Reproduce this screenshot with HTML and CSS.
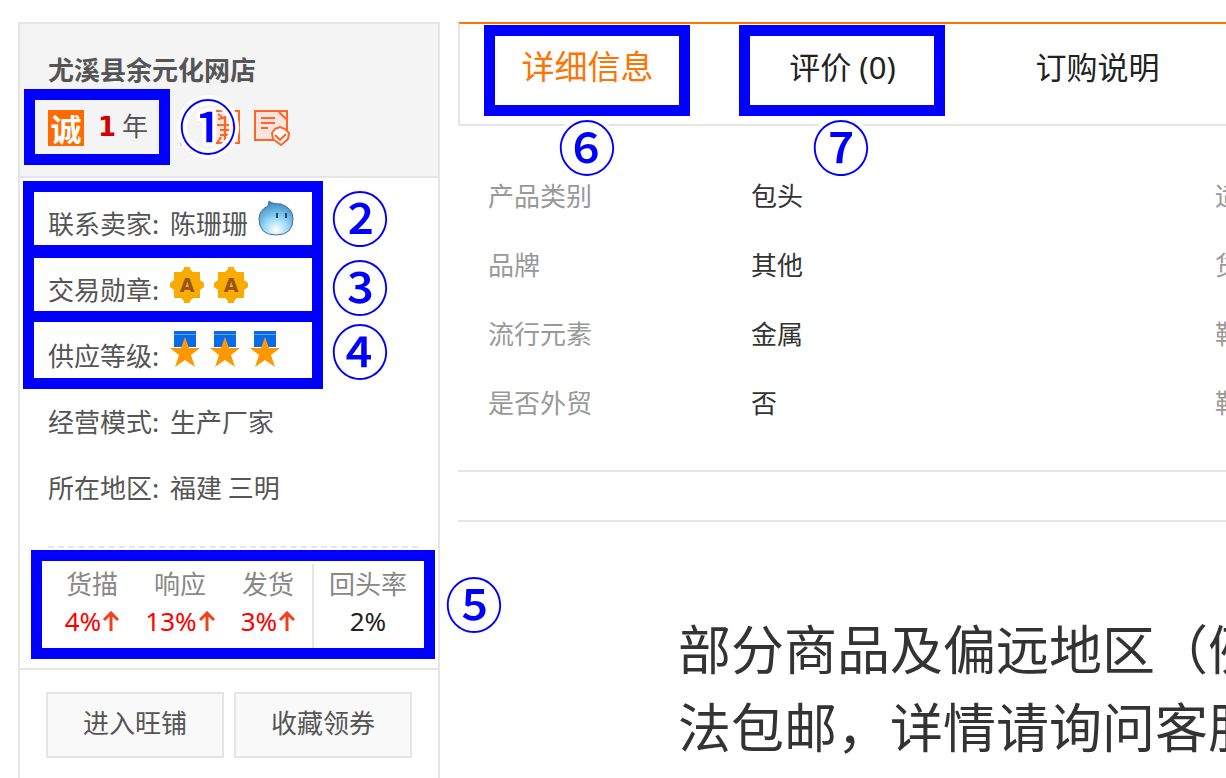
FILE: index.html
```
<!DOCTYPE html>
<html lang="zh-CN">
<head>
    <meta charset="UTF-8">
    <meta name="viewport" content="width=device-width, initial-scale=1.0">
    <title>尤溪县余元化网店</title>
    <link rel="stylesheet" href="styles.css">
</head>
<body>

    <!-- Iconos compartidos -->
    <svg class="sprite" aria-hidden="true">
        <symbol id="badge" viewBox="0 0 34 36">
            <path fill="#f9ab00" d="M14 0h6v2l3 3h7v8l4 3v4l-4 3v8h-7l-3 3v2h-6v-2l-3-3H4v-8l-4-3v-4l4-3V5h7l3-3z"/>
            <text class="badge-letter" x="17" y="25" text-anchor="middle">A</text>
        </symbol>
        <symbol id="medal" viewBox="0 0 30 36">
            <path fill="#0a6be8" d="M4 0h22v16H4z"/>
            <path fill="#5aa2f4" d="M4 3h22v1H4z"/>
            <path fill="#ff9800" d="M15 6l4 11h11l-9 7 4 12-10-7-10 7 4-12-9-7h11z"/>
        </symbol>
        <symbol id="up" viewBox="0 0 16 20">
            <path fill="none" stroke="#f0401c" stroke-width="3" d="M8 20V2M1 9l7-7 7 7"/>
        </symbol>
    </svg>

    <aside class="shop">
        <header class="shop-header">
            <h1>尤溪县余元化网店</h1>
            <div class="shop-icons">
                <span class="cheng">诚</span>
                <span class="years"><b>1</b> 年</span>
                <svg class="medal-icon" viewBox="0 0 60 36">
                    <path fill="#dcd9cc" d="M0 27h2v9H0z"/>
                    <path fill="#fbe5dc" d="M36 0h24v33H36z"/>
                    <path fill="none" stroke="#ff6428" stroke-width="2" d="M36 1h23v32H36M38 4l5 4M53 2q-6 6-15 7M45 6v27M37 15h18M40 20h12v5H40M41 27l-4 6M49 27l4 6"/>
                </svg>
                <svg class="doc-icon" viewBox="0 0 36 36">
                    <path fill="#fbe5dc" stroke="#ff6428" stroke-width="2" d="M1 1h32v29H1z"/>
                    <path fill="none" stroke="#ff6428" stroke-width="2" d="M7 8h14M7 13h14M7 18h7M25 2l7 7"/>
                    <path fill="#fff" stroke="#ff6428" stroke-width="2" d="M21 19l5-2 5 2 4 4-1 6-7 6-8-6-1-6z"/>
                    <path fill="none" stroke="#ff6428" stroke-width="2" d="M21 25l5 5 6-6"/>
                </svg>
            </div>
        </header>

        <dl class="shop-info">
            <div class="row">
                <dt>联系卖家:</dt>
                <dd>陈珊珊
                    <svg class="wangwang" viewBox="0 0 36 36">
                        <defs>
                            <radialGradient id="face" cx="50%" cy="85%" r="80%">
                                <stop offset="0" stop-color="#fff"/>
                                <stop offset=".4" stop-color="#9fdcf8"/>
                                <stop offset="1" stop-color="#3c8cc8"/>
                            </radialGradient>
                        </defs>
                        <path fill="url(#face)" stroke="#4a6f98" stroke-width="1" d="M10 6l1-5q3 3 12 3 12 4 12 15 0 16-17 16T1 19Q1 10 10 6z"/>
                        <path stroke="#204a78" stroke-width="2" d="M19 13v5M28 13v5"/>
                    </svg>
                </dd>
            </div>
            <div class="row">
                <dt>交易勋章:</dt>
                <dd class="badges">
                    <svg class="badge"><use href="#badge"/></svg>
                    <svg class="badge"><use href="#badge"/></svg>
                </dd>
            </div>
            <div class="row">
                <dt>供应等级:</dt>
                <dd class="medals">
                    <svg class="medal"><use href="#medal"/></svg>
                    <svg class="medal"><use href="#medal"/></svg>
                    <svg class="medal"><use href="#medal"/></svg>
                </dd>
            </div>
            <div class="row">
                <dt>经营模式:</dt>
                <dd>生产厂家</dd>
            </div>
            <div class="row">
                <dt>所在地区:</dt>
                <dd>福建 三明</dd>
            </div>
        </dl>

        <div class="stats">
            <div class="stat">货描<span class="up">4%<svg><use href="#up"/></svg></span></div>
            <div class="stat">响应<span class="up">13%<svg><use href="#up"/></svg></span></div>
            <div class="stat">发货<span class="up">3%<svg><use href="#up"/></svg></span></div>
            <div class="stat return">回头率<span>2%</span></div>
        </div>

        <div class="shop-buttons">
            <button type="button">进入旺铺</button>
            <button type="button">收藏领券</button>
        </div>
    </aside>

    <main class="detail">
        <nav class="tabs">
            <a href="#info" class="active">详细信息</a>
            <a href="#reviews">评价 (0)</a>
            <a href="#order">订购说明</a>
        </nav>

        <table class="attributes" id="info">
            <tr><th>产品类别</th><td>包头</td><th>适</th></tr>
            <tr><th>品牌</th><td>其他</td><th>货</th></tr>
            <tr><th>流行元素</th><td>金属</td><th>鞋</th></tr>
            <tr><th>是否外贸</th><td>否</td><th>鞋</th></tr>
        </table>

        <div class="divider"></div>

        <p class="notice">部分商品及偏远地区（例<br>法包邮，详情请询问客服</p>
    </main>

    <!-- Marcas numeradas sobre la pagina -->
    <div class="marks">
        <div class="box box1"></div><span class="num num1">①</span>
        <div class="box box2"></div><span class="num num2">②</span>
        <div class="box box3"></div><span class="num num3">③</span>
        <div class="box box4"></div><span class="num num4">④</span>
        <div class="box box5"></div><span class="num num5">⑤</span>
        <div class="box box6"></div><span class="num num6">⑥</span>
        <div class="box box7"></div><span class="num num7">⑦</span>
    </div>

</body>
</html>
```
FILE: styles.css
```
* {
    box-sizing: border-box;
}
body {
    display: flex;
    align-items: stretch;
    gap: 18px;
    position: relative;
    min-height: 100vh;
    margin: 0;
    padding: 22px 0 0 18px;
    overflow: hidden;
    background-color: #fff;
    color: #555;
    font-family: "Noto Sans CJK SC", sans-serif;
    font-size: 26px;
    line-height: 38px;
}
svg {
    display: block;
    flex: none;
}
.sprite {
    position: absolute;
    width: 0;
    height: 0;
}

/* Tarjeta de la tienda */
.shop {
    flex: 0 0 422px;
    border: 2px solid #e5e5e5;
    border-bottom: none;
}
.shop-header {
    padding: 26px 28px 30px;
    background-color: #f4f4f4;
    border-bottom: 2px solid #e5e5e5;
}
.shop-header h1 {
    margin: 0 0 22px;
    font-size: 26px;
    line-height: 38px;
}
.shop-icons {
    display: flex;
    height: 36px;
}
.cheng,
.doc-icon {
    width: 36px;
    height: 36px;
}
.cheng {
    background-color: #ff6b00;
    color: #fff;
    font-size: 31px;
    font-weight: bold;
    line-height: 36px;
    text-align: center;
}
.years {
    margin: -4px 32px 0 14px;
}
.years b {
    color: #d20000;
    font-family: "DejaVu Sans", sans-serif;
}
.medal-icon {
    width: 60px;
    height: 36px;
    margin-right: 14px;
}
.shop-info {
    margin: 0 20px 0 28px;
    padding: 12px 0 26px;
    border-bottom: 2px dashed #e5e5e5;
}
.row {
    display: flex;
    align-items: center;
    height: 66px;
}
.row dt {
    width: 122px;
}
.row dd {
    display: flex;
    gap: 10px;
    margin: 0;
}
.wangwang {
    width: 36px;
    height: 36px;
    margin-top: -4px;
}
.badge {
    width: 34px;
    height: 36px;
    margin-top: -8px;
}
.badge-letter {
    fill: #96531c;
    font-family: "DejaVu Sans", sans-serif;
    font-size: 19px;
    font-weight: bold;
}
.medal {
    width: 30px;
    height: 36px;
    margin-top: -12px;
}
.stats {
    display: flex;
    margin: 16px 16px 0 28px;
    height: 104px;
}
.stat {
    flex: 1;
    height: 84px;
    color: #888;
    text-align: center;
}
.stat span {
    display: flex;
    justify-content: center;
    align-items: center;
    color: #222;
    font-family: "Noto Sans", sans-serif;
}
.stat .up {
    color: #f00;
}
.stat svg {
    width: 16px;
    height: 20px;
    margin-left: 2px;
}
.stat.return {
    flex: 0 0 110px;
    border-left: 2px solid #e5e5e5;
}
.shop-buttons {
    display: flex;
    gap: 10px;
    padding: 22px 26px;
    border-top: 2px solid #e5e5e5;
}
.shop-buttons button {
    flex: 1;
    height: 66px;
    padding: 0 0 6px;
    border: 2px solid #e5e5e5;
    background-color: #f9f9f9;
    color: #555;
    font: inherit;
    cursor: pointer;
}

/* Detalle del producto */
.detail {
    flex: 1;
    min-width: 0;
    overflow: hidden;
}
.tabs {
    display: flex;
    height: 104px;
    border: 2px solid #e5e5e5;
    border-top-color: #ff7300;
    border-right: none;
}
.tabs a {
    flex: 0 0 255px;
    padding: 20px 0;
    color: #222;
    font-family: "Noto Sans", "Noto Sans CJK SC", sans-serif;
    font-size: 31px;
    line-height: 46px;
    text-align: center;
    text-decoration: none;
}
.tabs .active {
    color: #ff7300;
    font-size: 33px;
}
.attributes {
    width: 990px;
    margin: 34px 0 34px 30px;
    border-collapse: collapse;
    table-layout: fixed;
    text-align: left;
}
.attributes th,
.attributes td {
    height: 69px;
    padding: 0;
    font-weight: normal;
}
.attributes th {
    width: 263px;
    color: #999;
}
.attributes td {
    width: 464px;
    color: #333;
}
.divider {
    height: 52px;
    border: 2px solid #e5e5e5;
    border-width: 2px 0;
}
.notice {
    margin: 86px 0 0 220px;
    color: #333;
    font-size: 53px;
    line-height: 78px;
    white-space: nowrap;
}

/* Marcas */
.marks {
    position: absolute;
    top: 0;
    left: 0;
}
.box,
.num {
    position: absolute;
}
.box {
    border: 11px solid #00f;
}
.num {
    width: 58px;
    height: 58px;
    color: #00f;
    font-size: 58px;
    font-weight: 500;
    line-height: 58px;
    text-align: center;
    text-shadow: 4px 0 #fff, -4px 0 #fff, 0 4px #fff, 0 -4px #fff,
        3px 3px #fff, -3px 3px #fff, 3px -3px #fff, -3px -3px #fff;
}
.box1 { left: 24px; top: 89px; width: 146px; height: 76px; }
.box2 { left: 23px; top: 181px; width: 300px; height: 75px; }
.box3 { left: 23px; top: 247px; width: 300px; height: 75px; }
.box4 { left: 23px; top: 311px; width: 300px; height: 78px; }
.box5 { left: 31px; top: 550px; width: 404px; height: 109px; }
.box6 { left: 484px; top: 25px; width: 206px; height: 91px; }
.box7 { left: 739px; top: 25px; width: 206px; height: 91px; }
.num1 { left: 179px; top: 95px; }
.num2 { left: 331px; top: 187px; }
.num3 { left: 331px; top: 256px; }
.num4 { left: 331px; top: 320px; }
.num5 { left: 445px; top: 573px; }
.num6 { left: 558px; top: 116px; }
.num7 { left: 812px; top: 116px; }
```
